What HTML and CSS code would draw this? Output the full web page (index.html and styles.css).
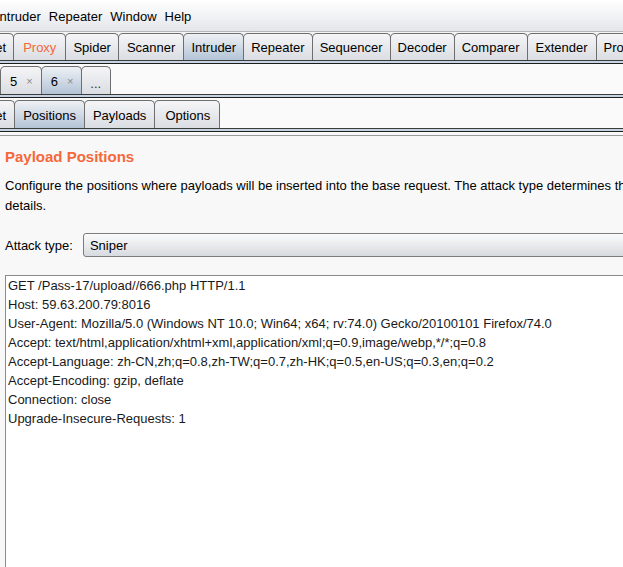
FILE: index.html
```html
<!DOCTYPE html>
<html lang="en">
<head>
  <meta charset="UTF-8">
  <title>Burp Suite - Intruder</title>
  <link rel="stylesheet" href="styles.css">
</head>
<body>
  <!-- メニューバー -->
  <div class="menubar">
    <span class="menu first">Intruder</span>
    <span class="menu">Repeater</span>
    <span class="menu">Window</span>
    <span class="menu">Help</span>
  </div>

  <!-- メインタブ -->
  <div class="tabbar main">
    <div class="tabs">
      <span class="tab cut-target">Target</span>
      <span class="tab wide proxy">Proxy</span>
      <span class="tab">Spider</span>
      <span class="tab wide">Scanner</span>
      <span class="tab active">Intruder</span>
      <span class="tab">Repeater</span>
      <span class="tab">Sequencer</span>
      <span class="tab">Decoder</span>
      <span class="tab">Comparer</span>
      <span class="tab wide">Extender</span>
      <span class="tab">Project options</span>
    </div>
    <div class="tab-line"></div>
  </div>

  <!-- 攻撃番号タブ -->
  <div class="tabbar sub">
    <div class="tabs">
      <span class="tab num">5<span class="close">×</span></span>
      <span class="tab num active">6<span class="close">×</span></span>
      <span class="tab more">...</span>
    </div>
    <div class="tab-line"></div>
  </div>

  <!-- Intruder 内タブ -->
  <div class="tabbar sub">
    <div class="tabs">
      <span class="tab cut-target">Target</span>
      <span class="tab active">Positions</span>
      <span class="tab">Payloads</span>
      <span class="tab wide">Options</span>
    </div>
    <div class="tab-line"></div>
  </div>

  <div class="content">
    <h2 class="section-title">Payload Positions</h2>
    <p class="desc">Configure the positions where payloads will be inserted into the base request. The attack type determines the way in which payloads are assigned to payload positions - see help for full<br>details.</p>

    <div class="attack-row">
      <label class="attack-label">Attack type:</label>
      <div class="select">Sniper</div>
    </div>

    <pre class="editor">GET /Pass-17/upload//666.php HTTP/1.1
Host: 59.63.200.79:8016
User-Agent: Mozilla/5.0 (Windows NT 10.0; Win64; x64; rv:74.0) Gecko/20100101 Firefox/74.0
Accept: text/html,application/xhtml+xml,application/xml;q=0.9,image/webp,*/*;q=0.8
Accept-Language: zh-CN,zh;q=0.8,zh-TW;q=0.7,zh-HK;q=0.5,en-US;q=0.3,en;q=0.2
Accept-Encoding: gzip, deflate
Connection: close
Upgrade-Insecure-Requests: 1
</pre>
  </div>
</body>
</html>
```

FILE: styles.css
```css
/* 基本設定 */
* {
  box-sizing: border-box;
  margin: 0;
  padding: 0;
}
html, body {
  width: 623px;
  height: 567px;
  overflow: hidden;
}
body {
  font-family: 'Liberation Sans', Arial, sans-serif;
  font-size: 13px;
  color: #000;
  background: #f8f8f8;
}

/* メニューバー */
.menubar {
  height: 32px;
  display: flex;
  align-items: center;
  gap: 8px;
  padding-top: 1px;
  background: linear-gradient(#ffffff, #e4e6ea);
  border-bottom: 1px solid #b4b6ba;
  white-space: nowrap;
}
.menu.first {
  margin-left: -4px;
}

/* タブ */
.tabbar {
  width: 1000px;
  background: #fafafa;
}
.tabbar.main {
  padding-top: 1px;
  background: #f4f4f4;
}
.tabbar.sub {
  padding-top: 2px;
}
.tabs {
  display: flex;
  align-items: flex-end;
}
.tab {
  height: 27px;
  display: flex;
  align-items: center;
  padding: 1px 7px 0;
  margin-right: -1px;
  white-space: nowrap;
  background: linear-gradient(#f5f5f7, #dadde2);
  border: 1px solid #6e6e6e;
  border-bottom: none;
  border-radius: 5px 5px 0 0;
}
.tab.wide {
  padding: 1px 8px 0;
}
.tab.proxy {
  padding: 1px 9px 0;
  color: #f5683a;
}
.sub .tab {
  height: 28px;
  padding: 1px 8px 0;
}
.sub .tab.wide {
  padding: 1px 9px 0 10px;
}
.tab.active {
  background: linear-gradient(#eef1f5, #b3c3d6);
  position: relative;
  z-index: 1;
}
.tab.cut-target {
  margin-left: -38px;
}
.sub .tab.cut-target {
  margin-left: -39px;
}
.sub .tab.num {
  padding: 1px 8px 0 9px;
}
.tab .close {
  font-size: 11px;
  color: #8a8a8a;
  margin-left: 9px;
}
.sub .tab.more {
  padding: 6px 8px 0;
  width: 30px;
  color: #333;
}
.tab-line {
  height: 4px;
  background: #c5d3e3;
  border-top: 1px solid #3c3c3c;
  border-bottom: 1px solid #1e1e1e;
}

/* コンテンツ */
.content {
  border-top: 1px solid #9a9a9a;
  margin-top: 3px;
  padding: 11px 0 0 5px;
}
.section-title {
  font-size: 15px;
  line-height: 20px;
  color: #f5683a;
  font-weight: bold;
}
.desc {
  margin-top: 9px;
  line-height: 20px;
  white-space: nowrap;
}
.attack-row {
  display: flex;
  align-items: center;
  gap: 10px;
  margin-top: 17px;
}
.attack-label {
  flex: none;
  white-space: nowrap;
}
.select {
  flex: none;
  width: 700px;
  height: 24px;
  display: flex;
  align-items: center;
  padding-left: 6px;
  background: linear-gradient(#fbfbfc, #d7dadf);
  border: 1px solid #7c7c7c;
  border-radius: 3px;
}
.editor {
  margin-top: 18px;
  width: 700px;
  height: 320px;
  padding: 0 0 0 2px;
  background: #fff;
  border: 1px solid #8a8a8a;
  font-family: 'Liberation Sans', Arial, sans-serif;
  font-size: 13px;
  line-height: 19px;
  color: #1a1a1a;
}
```
